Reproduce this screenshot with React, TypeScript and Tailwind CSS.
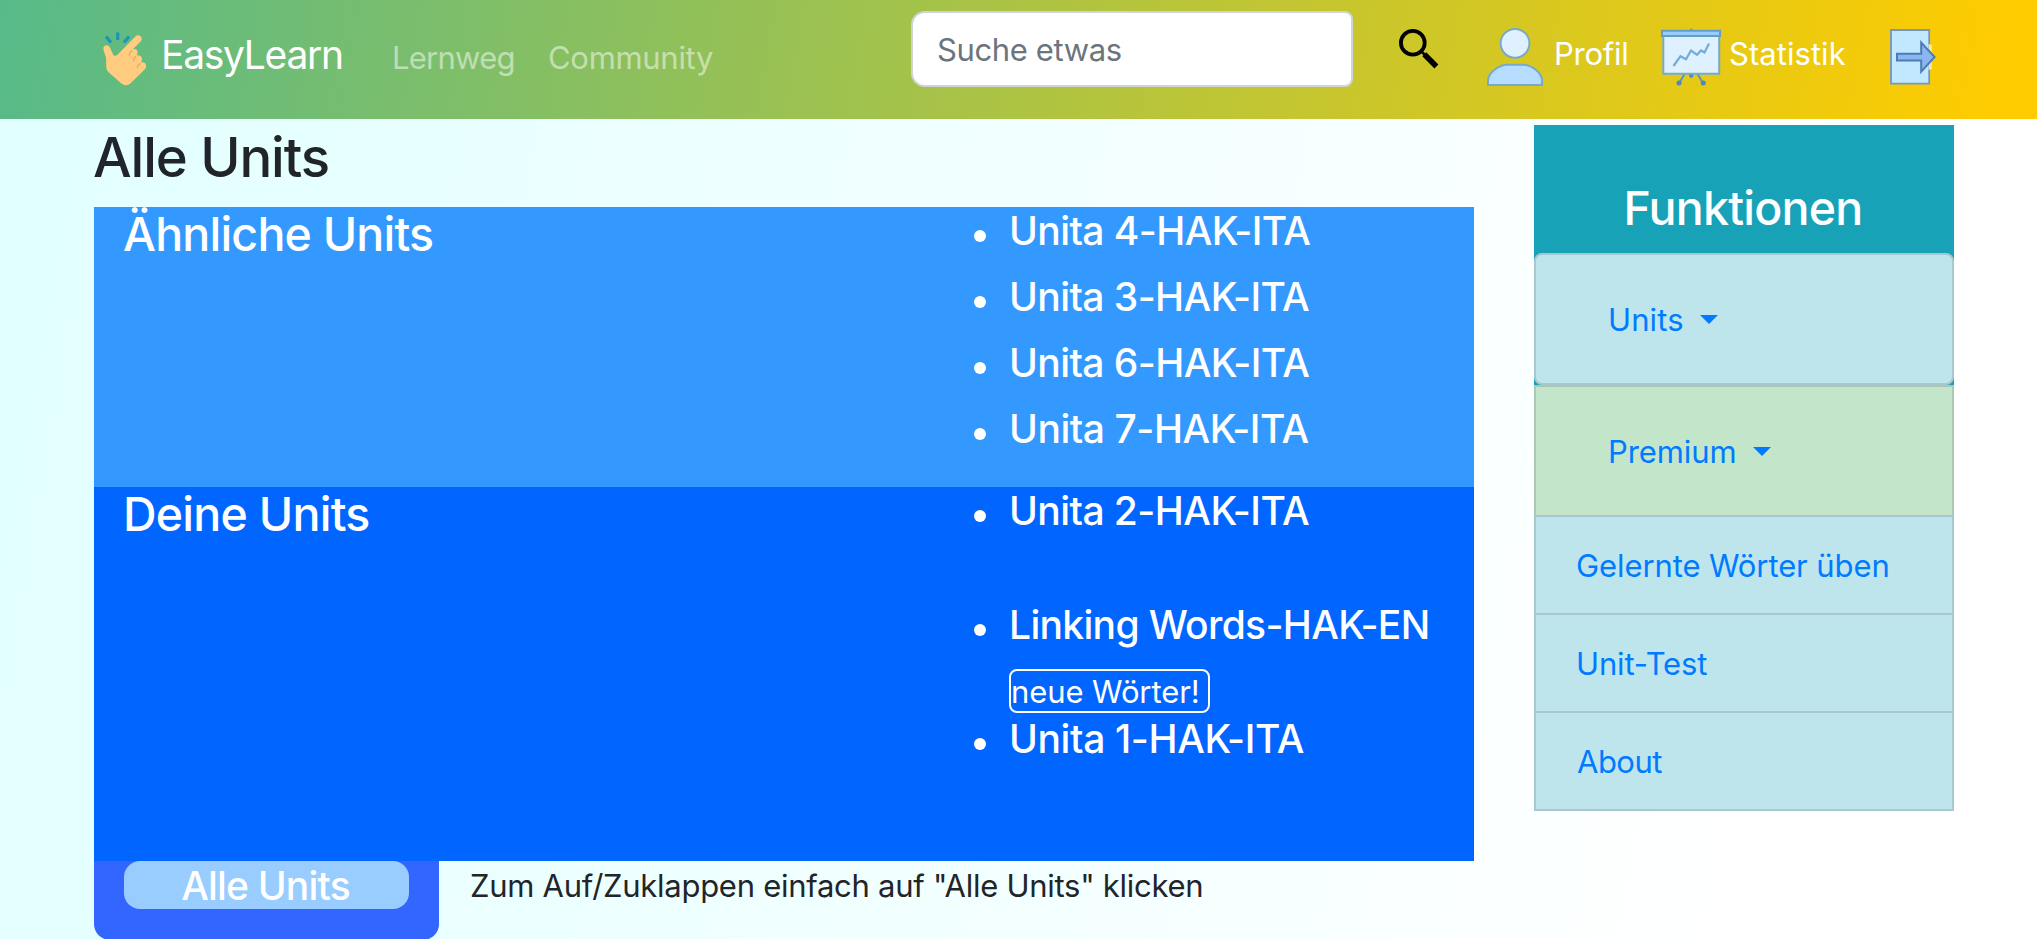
import React from "react";

function HandIcon() {
  return (
    <svg className="mt-6 h-[66px] w-[60px] shrink-0" viewBox="0 0 60 66" fill="none">
      <path d="M10 12.5 L15 18.5 M21.7 8.5 V16 M33 12.5 L28 18.5" stroke="#1f93bd" strokeWidth="3.2" />
      <path
        d="M7.4 24.2 C7.4 22.2 9 21.3 10.6 21.3 C12.4 21.3 13.6 22.6 14.4 24.5 L17.6 31.5 Q20.3 32.6 22.2 30 L39.6 12.2 C41 10.9 43.2 10.9 44.6 12.2 C46 13.6 46 15.6 44.8 17.2 L36.6 25.6 C38.8 24.2 41.6 25.6 41.6 28.2 C41.6 29.6 41.2 30.6 40.4 31.6 C43 30.4 46 32 46 35 C46 36.6 45.6 37.6 44.8 38.6 C47.6 37.4 50.3 39.4 50.2 42 C50.1 43.6 49.4 44.6 48.4 45.8 L34.6 59.2 Q30 63 25.4 59.4 L12.6 48.2 Q10.2 45.8 10.2 42.4 L10.1 33.8 L7.6 26.4 Z"
        fill="#ffcc80"
      />
      <path d="M36 26.5 L33.8 29 Q32.8 30.6 33.8 31.8 M40 32.3 L38.2 34.6 Q37.2 36 38.2 37.2 M44.2 39.4 L42.2 41.4 Q40.8 42.8 41.8 44.2" stroke="#f4ab62" strokeWidth="1.6" />
    </svg>
  );
}

function SearchIcon() {
  return (
    <svg className="ml-[42px] mt-[25px] h-[50px] w-[50px] shrink-0" viewBox="0 0 50 50" fill="none" stroke="#000">
      <circle cx="17.8" cy="17.8" r="11.9" strokeWidth="3.8" />
      <path d="M25.5 25.5 L30 30" strokeWidth="2.6" />
      <path d="M29.3 29.3 L41.4 41.4" strokeWidth="5.6" />
    </svg>
  );
}

function PersonIcon() {
  return (
    <svg className="ml-[35px] mt-5 h-[75px] w-[74px] shrink-0" viewBox="0 0 74 75" stroke="#77aac9" strokeWidth="2">
      <circle cx="35" cy="23.3" r="14.4" fill="#dff0fe" />
      <path d="M8 65 V61 C8 52 20 44.8 27 44.8 H43 C51 44.8 62 52 62 61 V65 Z" fill="#b6dcfe" />
    </svg>
  );
}

function BoardIcon() {
  return (
    <svg className="mt-5 h-[75px] w-[74px] shrink-0" viewBox="0 0 74 75" fill="none">
      <path d="M29.5 54 L24.3 63 M42.5 54 L48 63 M36.3 8.5 V12" stroke="#5b96be" strokeWidth="2" />
      <circle cx="24" cy="63" r="2.5" fill="#4788c7" />
      <circle cx="48.3" cy="63" r="2.5" fill="#4788c7" />
      <circle cx="36.2" cy="55.5" r="2.2" fill="#4788c7" />
      <path d="M8.3 16 H64.2 V53.7 H8.3 Z" fill="#dff0fe" stroke="#77aac9" strokeWidth="2" />
      <path d="M7 10.7 H65 V16 H7 Z" fill="#98ccfd" stroke="#639ec8" strokeWidth="2" />
      <path d="M18.5 46 L25.5 36.2 L31 39.2 L36 30.5 L42 34.7 L46 30.5 L49.5 32.5 L54 23.5" stroke="#74abd8" strokeWidth="2.2" />
    </svg>
  );
}

function ExitIcon() {
  return (
    <svg className="mt-5 h-[75px] w-[70px] shrink-0" viewBox="0 0 70 75">
      <path d="M11 10 H49.2 V63.7 H11 Z" fill="#c2e8ff" stroke="#7496c4" strokeWidth="1.8" />
      <path d="M48.5 24 L52 25 V49 L48.5 50 Z" fill="#e3e9b0" />
      <path d="M17 33.8 H41.2 V22.5 L54.6 37 L41.2 51.6 V40.4 H17 Z" fill="#8bb7f0" stroke="#4e7ab5" strokeWidth="2" />
    </svg>
  );
}

function Caret() {
  return (
    <svg className="mt-[19px] h-[9px] w-[18px]" viewBox="0 0 18 9">
      <path d="M0 0 H18 L9 9 Z" fill="#007bff" />
    </svg>
  );
}

function Unit({ name, tracking, className }: { name: string; tracking: string; className: string }) {
  return (
    <li className={`flex ${className}`}>
      <span className="ml-[1px] mt-[23px] size-3 shrink-0 rounded-full bg-white" />
      <span className={`ml-[23px] whitespace-nowrap text-[39px] font-medium leading-[48px] ${tracking}`}>{name}</span>
    </li>
  );
}

export default function App() {
  return (
    <div className="h-[939px] w-[2037px] overflow-hidden bg-[linear-gradient(100deg,#e1ffff,#ffffff_85%)] font-['Inter','Noto_Sans',sans-serif] text-[31px] leading-[48px] text-[#212529]">
      <nav className="flex h-[119px] items-start whitespace-nowrap bg-[linear-gradient(100deg,#57ba89,#ffcc00_98%)] pl-24 text-white">
        <HandIcon />
        <a className="ml-[5px] mt-[25px] w-[231px] shrink-0 text-[39px] leading-[60px] tracking-[-1.3px]">EasyLearn</a>
        <a className="mt-[34px] w-[156px] shrink-0 tracking-[-0.75px] text-white/50">Lernweg</a>
        <a className="mt-[34px] w-[363px] shrink-0 tracking-[-0.3px] text-white/50">Community</a>
        <div className="mt-[11px] h-[76px] w-[442px] shrink-0 rounded-l-[14px] rounded-r-lg border-2 border-[#ced4da] bg-white pl-6 pt-[13px] tracking-[-0.37px] text-[#6c757d]">
          Suche etwas
        </div>
        <SearchIcon />
        <PersonIcon />
        <a className="mt-[30px] w-[101px] shrink-0 tracking-[-0.25px]">Profil</a>
        <BoardIcon />
        <a className="mt-[30px] w-[151px] shrink-0 tracking-[0.05px]">Statistik</a>
        <ExitIcon />
      </nav>

      <div className="flex items-start pl-[94px]">
        <main className="w-[1380px] shrink-0">
          <h1 className="-ml-px h-[88px] pt-[5px] text-[54.5px] font-medium leading-[67px] tracking-[-1.1px]">Alle Units</h1>

          <section className="flex h-[280px] bg-[#3399ff] pl-[29px] text-white">
            <h2 className="w-[850px] text-[46.5px] font-medium leading-[55px] tracking-[-0.8px]">Ähnliche Units</h2>
            <ul>
              <Unit name="Unita 4-HAK-ITA" tracking="tracking-[-0.57px]" className="h-[66px]" />
              <Unit name="Unita 3-HAK-ITA" tracking="tracking-[-0.57px]" className="h-[66px]" />
              <Unit name="Unita 6-HAK-ITA" tracking="tracking-[-0.57px]" className="h-[66px]" />
              <Unit name="Unita 7-HAK-ITA" tracking="tracking-[-0.45px]" className="h-[66px]" />
            </ul>
          </section>

          <section className="flex h-[374px] bg-[#0066ff] pl-[29px] text-white">
            <h2 className="w-[850px] text-[46.5px] font-medium leading-[55px] tracking-[-0.75px]">Deine Units</h2>
            <ul>
              <Unit name="Unita 2-HAK-ITA" tracking="tracking-[-0.55px]" className="h-[114px]" />
              <Unit name="Linking Words-HAK-EN" tracking="tracking-[-0.67px]" className="h-[68px]" />
              <li className="ml-9 h-[46px]">
                <span className="block h-11 w-[201px] whitespace-nowrap rounded-lg border-2 border-white leading-[41px] tracking-[-0.1px]">
                  neue Wörter!
                </span>
              </li>
              <Unit name="Unita 1-HAK-ITA" tracking="tracking-[-0.36px]" className="h-[66px]" />
            </ul>
          </section>

          <div className="flex">
            <div className="h-[79px] w-[345px] shrink-0 rounded-b-2xl bg-[#3366ff] px-[30px]">
              <button className="block h-12 w-[285px] rounded-2xl bg-[#99ccff] pr-[2px] text-center text-[39px] font-medium leading-[49px] tracking-[-0.8px] text-white">
                Alle Units
              </button>
            </div>
            <p className="ml-[31px] mt-[1px] whitespace-nowrap tracking-[-0.27px]">
              Zum Auf/Zuklappen einfach auf "Alle Units" klicken
            </p>
          </div>
        </main>

        <aside className="ml-[60px] mt-1.5 w-[420px] shrink-0 whitespace-nowrap bg-[#17a2b8] text-[#007bff]">
          <h2 className="h-32 pr-[2px] pt-[55px] text-center text-[46.5px] font-medium leading-[56px] tracking-[-0.76px] text-white">Funktionen</h2>
          <div className="flex h-[132px] gap-4 rounded-lg border-2 border-[#a6c8ce] bg-[#bee5eb] pl-[72px] pt-[41px] tracking-[0.1px]">
            Units
            <Caret />
          </div>
          <div className="flex h-[130px] gap-[17px] border-2 border-b-0 border-[#abc9b2] bg-[#c3e6cb] pl-[72px] pt-[41px] tracking-[-0.1px]">
            Premium
            <Caret />
          </div>
          <div className="h-[98px] border-2 border-b-0 border-[#a6c8ce] bg-[#bee5eb] pl-10 pt-[25px] tracking-[-0.1px]">Gelernte Wörter üben</div>
          <div className="h-[98px] border-2 border-b-0 border-[#a6c8ce] bg-[#bee5eb] pl-10 pt-[25px] tracking-[-0.15px]">Unit-Test</div>
          <div className="h-[100px] border-2 border-[#a6c8ce] bg-[#bee5eb] pl-[41px] pt-[25px] tracking-[-0.5px]">About</div>
        </aside>
      </div>
    </div>
  );
}
